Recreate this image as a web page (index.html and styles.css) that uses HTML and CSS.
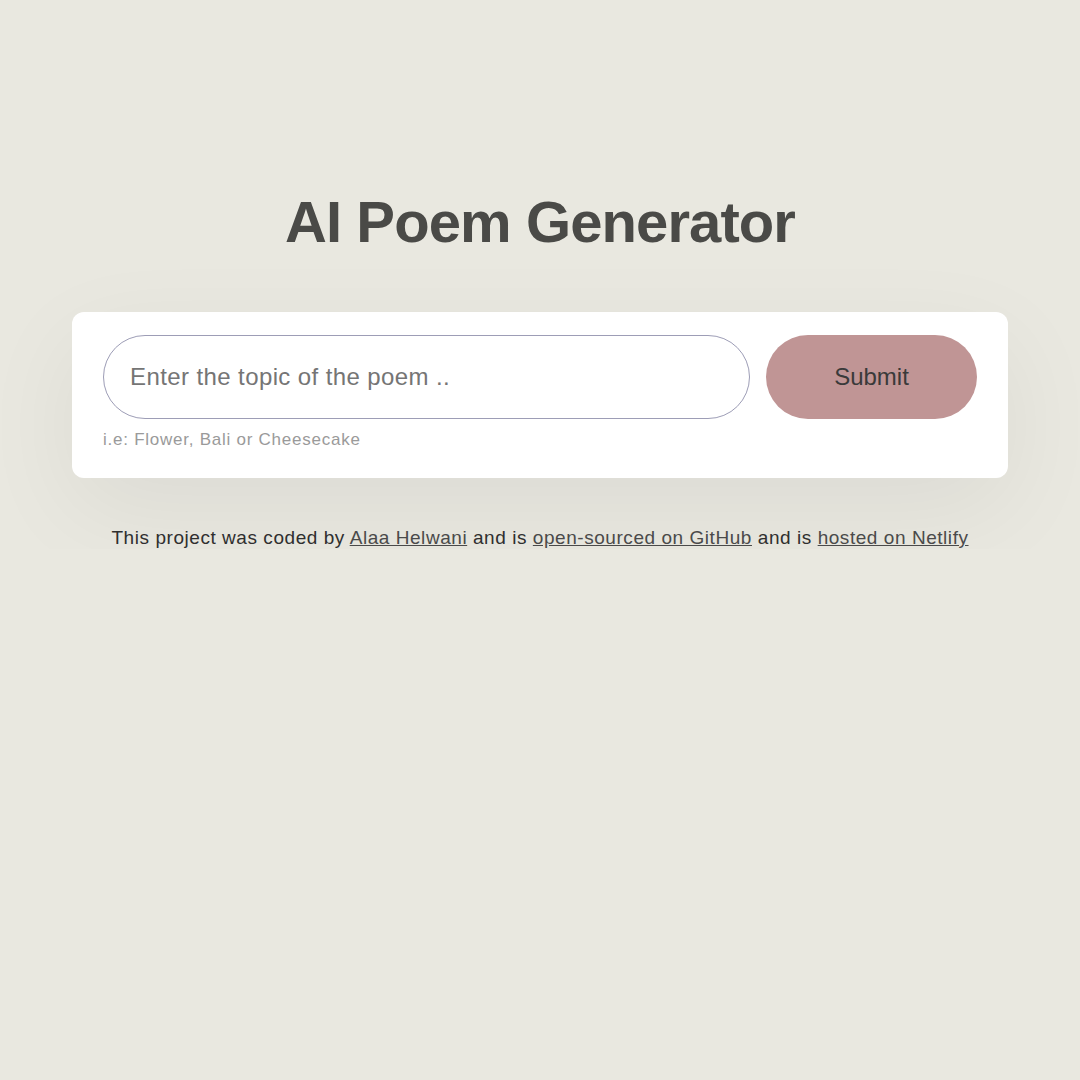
FILE: index.html
```html
<!DOCTYPE html>
<html>
<head>
<meta charset="utf-8">
<link rel="stylesheet" href="styles.css">
</head>
<body>
<div class="container">
  <h1 class="title">AI Poem Generator</h1>
  <form class="card">
    <div class="row">
      <input class="topic" type="text" placeholder="Enter the topic of the poem ..">
      <button class="submit" type="button">Submit</button>
    </div>
    <small class="hint">i.e: Flower, Bali or Cheesecake</small>
  </form>
  <footer class="footer">
    This project was coded by <a href="#">Alaa Helwani</a> and is <a href="#">open-sourced on GitHub</a> and is <a href="#">hosted on Netlify</a>
  </footer>
</div>
</body>
</html>
```

FILE: styles.css
```css
* { box-sizing: border-box; }
html, body {
  margin: 0;
  padding: 0;
  background: #e9e8e0;
  font-family: "Liberation Sans", Arial, sans-serif;
}
.container {
  width: 936px;
  margin: 0 auto;
  padding-top: 190px;
}
.title {
  margin: 0;
  text-align: center;
  font-size: 58px;
  font-weight: 700;
  letter-spacing: -0.9px;
  color: #4a4a47;
  line-height: 64px;
}
.card {
  margin-top: 58px;
  background: #ffffff;
  border-radius: 12px;
  padding: 23px 31px 28px;
  box-shadow: 0 30px 100px rgba(0, 0, 0, 0.06);
}
.row {
  display: flex;
  gap: 16px;
}
.topic {
  flex: 1;
  height: 84px;
  border: 1px solid #9d9db6;
  border-radius: 42px;
  padding: 0 26px;
  font-family: "Liberation Sans", Arial, sans-serif;
  font-size: 24px;
  letter-spacing: 0.4px;
  color: #333;
  background: #fff;
  outline: none;
}
.topic::placeholder { color: #757575; }
.submit {
  width: 211px;
  height: 84px;
  border: none;
  border-radius: 42px;
  background: #c09595;
  font-family: "Liberation Sans", Arial, sans-serif;
  font-size: 24px;
  color: #3a3a3a;
}
.hint {
  display: block;
  margin-top: 11px;
  font-size: 17px;
  letter-spacing: 0.75px;
  color: #9a9a9a;
  line-height: 20px;
}
.footer {
  margin-top: 49px;
  text-align: center;
  font-size: 19px;
  letter-spacing: 0.55px;
  color: #2f2f2f;
  line-height: 22px;
}
.footer a {
  color: #4a4a4a;
  text-decoration: underline;
}
```
